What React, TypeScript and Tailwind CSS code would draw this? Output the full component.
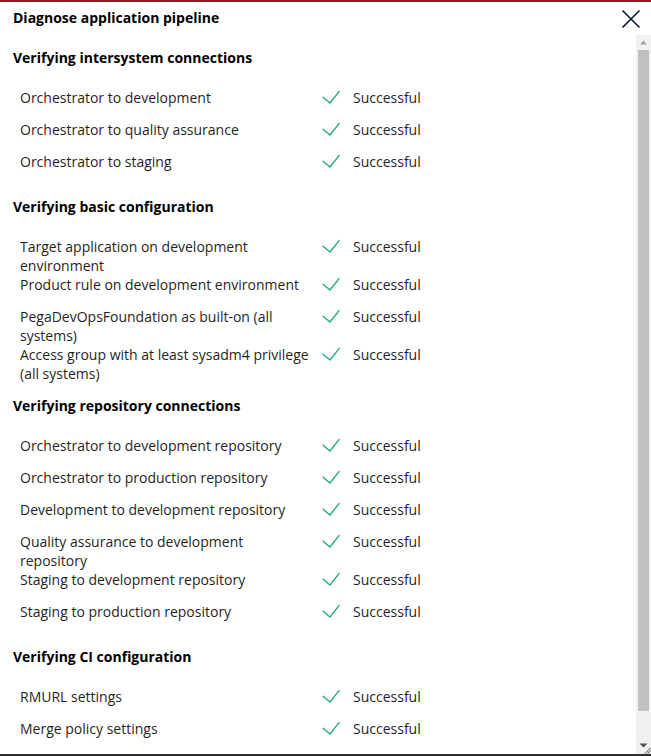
const SECTIONS = [
  {
    title: 'Verifying intersystem connections',
    rows: ['Orchestrator to development', 'Orchestrator to quality assurance', 'Orchestrator to staging'],
  },
  {
    title: 'Verifying basic configuration',
    rows: [
      'Target application on development environment',
      'Product rule on development environment',
      'PegaDevOpsFoundation as built-on (all systems)',
      'Access group with at least sysadm4 privilege (all systems)',
    ],
  },
  {
    title: 'Verifying repository connections',
    rows: [
      'Orchestrator to development repository',
      'Orchestrator to production repository',
      'Development to development repository',
      'Quality assurance to development repository',
      'Staging to development repository',
      'Staging to production repository',
    ],
  },
  {
    title: 'Verifying CI configuration',
    rows: ['RMURL settings', 'Merge policy settings'],
  },
];

function CheckMark() {
  return (
    <svg width="18" height="14" viewBox="0 0 18 14" className="mt-[1.5px] shrink-0" fill="none">
      <path d="M1 7.2 L8 13 L17.2 1.4" stroke="#1aa87a" strokeWidth="1.3" strokeLinecap="round" strokeLinejoin="round" />
    </svg>
  );
}

function Row({ label }: { label: string }) {
  return (
    <div className="flex items-start min-h-[32px] pl-[7px] text-[14px] leading-[19px] text-[#1f1f1f]">
      <div className="w-[290px]">{label}</div>
      <div className="ml-[12px]">
        <CheckMark />
      </div>
      <div className="ml-[13px]">Successful</div>
    </div>
  );
}

export default function App() {
  return (
    <div
      className="w-[651px] h-[756px] flex flex-col bg-white border-t-2 border-t-[#8c1d1d] border-b-2 border-b-[#2e2e2e] overflow-hidden"
      style={{ fontFamily: '"Open Sans", "Noto Sans", sans-serif' }}
    >
      {/* header */}
      <div className="h-[33px] shrink-0 flex items-start justify-between pl-[13px] pr-[10px]">
        <h1 className="mt-[6px] text-[14px] leading-[20px] font-bold text-black">Diagnose application pipeline</h1>
        <svg width="20" height="20" viewBox="0 0 20 20" className="mt-[7px]" fill="none">
          <path d="M1.5 1.5 L18.5 18.5 M18.5 1.5 L1.5 18.5" stroke="#0f1a3a" strokeWidth="1.7" />
        </svg>
      </div>

      {/* body */}
      <div className="flex-1 flex min-h-0">
        <div className="flex-1 pl-[13px] pt-[13px]">
          {SECTIONS.map((s, i) => (
            <div key={s.title} className={i > 0 ? 'mt-[13px]' : ''}>
              <h2 className="text-[14px] leading-[20px] font-bold text-black">{s.title}</h2>
              <div className="mt-5">
                {s.rows.map((r) => (
                  <Row key={r} label={r} />
                ))}
              </div>
            </div>
          ))}
        </div>

        {/* scrollbar */}
        <div className="w-[15px] shrink-0 flex flex-col bg-[#f1f1f1]">
          <div className="h-[15px] flex items-center justify-center">
            <svg width="15" height="15" viewBox="0 0 15 15">
              <path d="M4 9.5 L7.5 5.5 L11 9.5 Z" fill="#a3a3a3" />
            </svg>
          </div>
          <div className="h-[661px] mx-[2px] bg-[#c1c1c1]" />
          <div className="flex-1" />
          <div className="h-[15px]">
            <svg width="15" height="15" viewBox="0 0 15 15">
              <path d="M3.5 4.5 L7.5 8.5 L11.5 4.5 Z" fill="#505050" />
              <path d="M14.5 9 L9 14.5 M14.5 11.5 L11.5 14.5 M14.5 14 L14 14.5" stroke="#333" strokeWidth="0.9" />
            </svg>
          </div>
        </div>
      </div>
    </div>
  );
}
